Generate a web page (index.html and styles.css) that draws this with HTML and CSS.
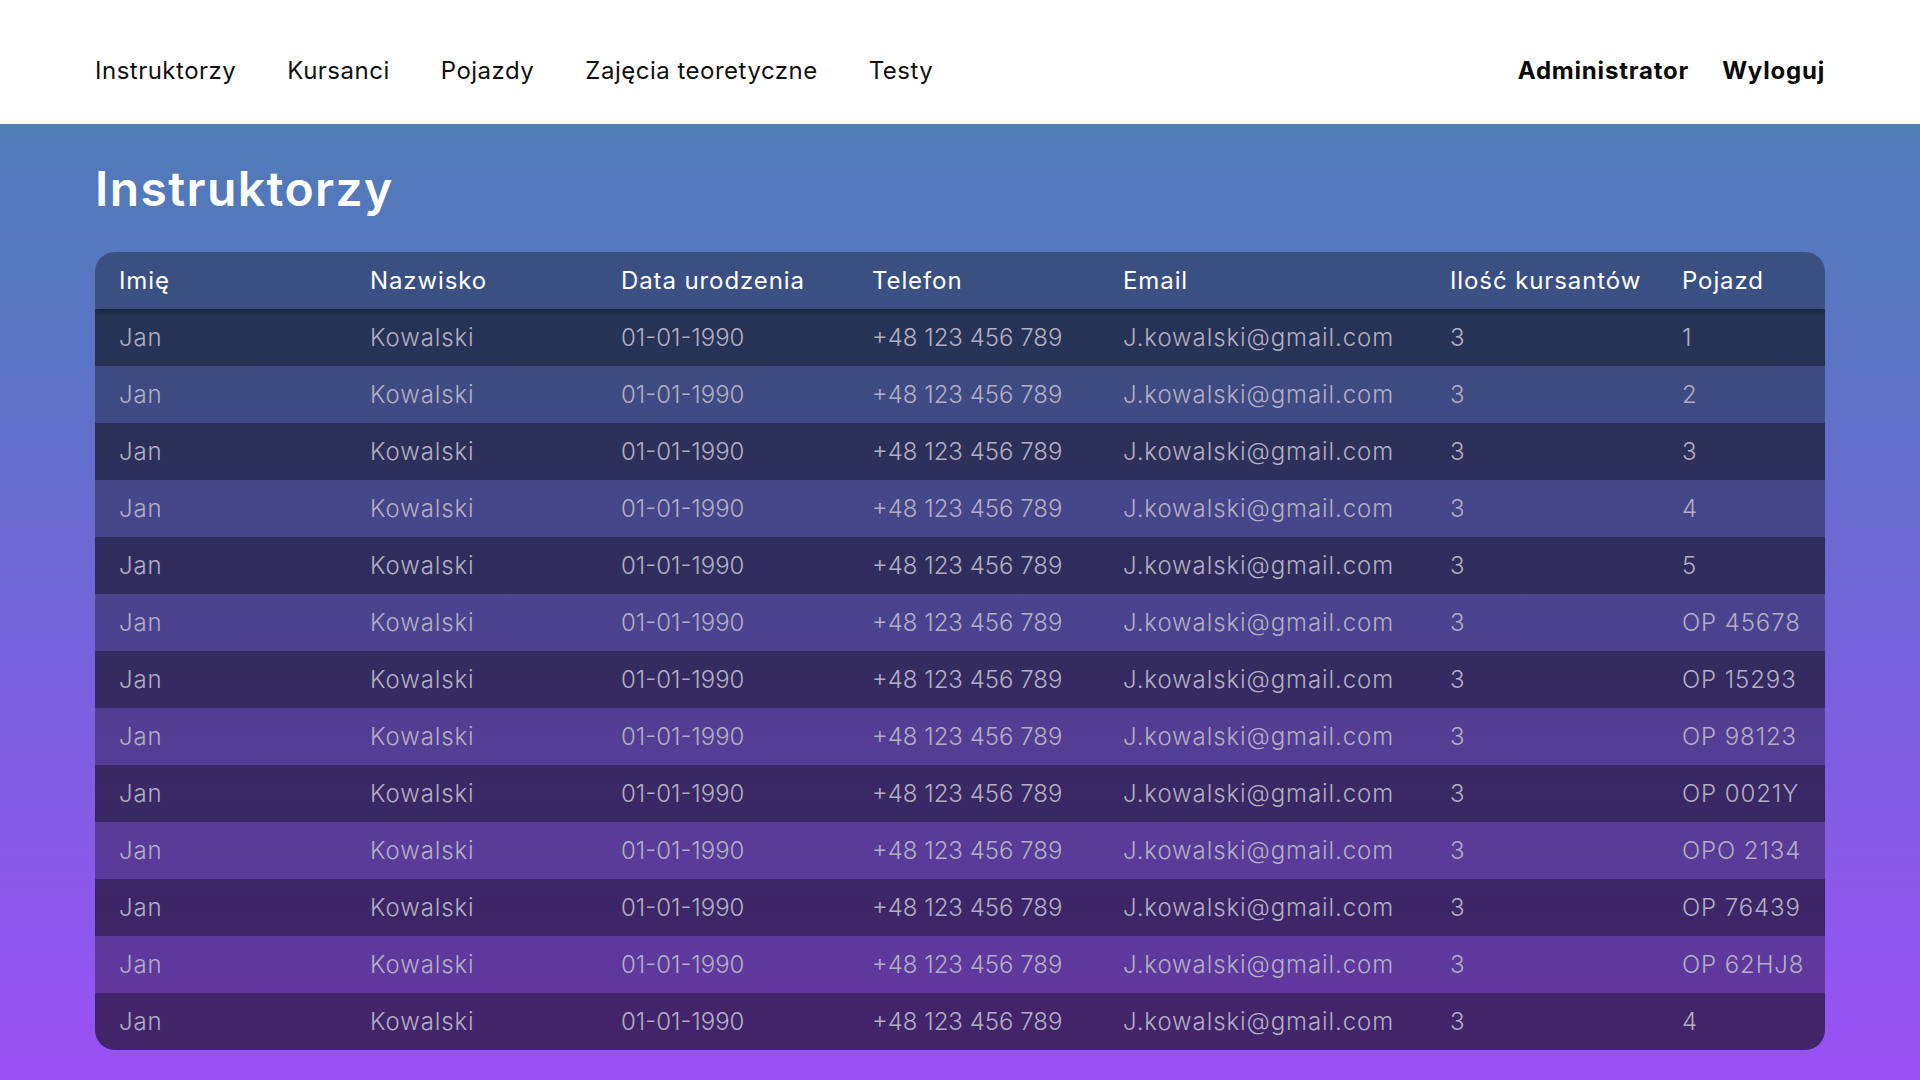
FILE: index.html
```html
<!DOCTYPE html>
<html lang="pl">
<head>
<meta charset="utf-8">
<title>Instruktorzy</title>
<link rel="stylesheet" href="styles.css">
</head>
<body>
<header class="topbar">
  <nav class="nav-left">
    <a class="nav-link" href="#">Instruktorzy</a>
    <a class="nav-link" href="#">Kursanci</a>
    <a class="nav-link" href="#">Pojazdy</a>
    <a class="nav-link" href="#">Zajęcia teoretyczne</a>
    <a class="nav-link" href="#">Testy</a>
  </nav>
  <nav class="nav-right">
    <a class="nav-link strong" href="#">Administrator</a>
    <a class="nav-link strong" href="#">Wyloguj</a>
  </nav>
</header>
<main class="content">
  <h1 class="page-title">Instruktorzy</h1>
  <table class="data-table">
    <colgroup>
      <col class="c1"><col class="c2"><col class="c3"><col class="c4"><col class="c5"><col class="c6"><col class="c7">
    </colgroup>
    <thead>
      <tr><th>Imię</th><th>Nazwisko</th><th>Data urodzenia</th><th>Telefon</th><th>Email</th><th>Ilość kursantów</th><th>Pojazd</th></tr>
    </thead>
    <tbody>
      <tr><td>Jan</td><td>Kowalski</td><td class="num">01-01-1990</td><td class="num">+48 123 456 789</td><td>J.kowalski@gmail.com</td><td>3</td><td>1</td></tr>
      <tr><td>Jan</td><td>Kowalski</td><td class="num">01-01-1990</td><td class="num">+48 123 456 789</td><td>J.kowalski@gmail.com</td><td>3</td><td>2</td></tr>
      <tr><td>Jan</td><td>Kowalski</td><td class="num">01-01-1990</td><td class="num">+48 123 456 789</td><td>J.kowalski@gmail.com</td><td>3</td><td>3</td></tr>
      <tr><td>Jan</td><td>Kowalski</td><td class="num">01-01-1990</td><td class="num">+48 123 456 789</td><td>J.kowalski@gmail.com</td><td>3</td><td>4</td></tr>
      <tr><td>Jan</td><td>Kowalski</td><td class="num">01-01-1990</td><td class="num">+48 123 456 789</td><td>J.kowalski@gmail.com</td><td>3</td><td>5</td></tr>
      <tr><td>Jan</td><td>Kowalski</td><td class="num">01-01-1990</td><td class="num">+48 123 456 789</td><td>J.kowalski@gmail.com</td><td>3</td><td>OP 45678</td></tr>
      <tr><td>Jan</td><td>Kowalski</td><td class="num">01-01-1990</td><td class="num">+48 123 456 789</td><td>J.kowalski@gmail.com</td><td>3</td><td>OP 15293</td></tr>
      <tr><td>Jan</td><td>Kowalski</td><td class="num">01-01-1990</td><td class="num">+48 123 456 789</td><td>J.kowalski@gmail.com</td><td>3</td><td>OP 98123</td></tr>
      <tr><td>Jan</td><td>Kowalski</td><td class="num">01-01-1990</td><td class="num">+48 123 456 789</td><td>J.kowalski@gmail.com</td><td>3</td><td>OP 0021Y</td></tr>
      <tr><td>Jan</td><td>Kowalski</td><td class="num">01-01-1990</td><td class="num">+48 123 456 789</td><td>J.kowalski@gmail.com</td><td>3</td><td>OPO 2134</td></tr>
      <tr><td>Jan</td><td>Kowalski</td><td class="num">01-01-1990</td><td class="num">+48 123 456 789</td><td>J.kowalski@gmail.com</td><td>3</td><td>OP 76439</td></tr>
      <tr><td>Jan</td><td>Kowalski</td><td class="num">01-01-1990</td><td class="num">+48 123 456 789</td><td>J.kowalski@gmail.com</td><td>3</td><td>OP 62HJ8</td></tr>
      <tr><td>Jan</td><td>Kowalski</td><td class="num">01-01-1990</td><td class="num">+48 123 456 789</td><td>J.kowalski@gmail.com</td><td>3</td><td>4</td></tr>
    </tbody>
  </table>
</main>
</body>
</html>
```
FILE: styles.css
```css
* { box-sizing: border-box; }
html, body { margin: 0; padding: 0; }
body {
  font-family: Inter, "Noto Sans", sans-serif;
  min-height: 1080px;
  background: linear-gradient(to bottom, #ffffff 0, #ffffff 124px, #4f7bb8 124px, #5b74c4 360px, #7563db 640px, #9a50f5 1080px);
}
.topbar {
  height: 124px;
  background: #ffffff;
  display: flex;
  align-items: center;
  justify-content: space-between;
  padding: 16px 95px 0;
}
.nav-left, .nav-right { display: flex; align-items: center; gap: 51px; }
.nav-right { gap: 33px; }
.nav-link {
  font-size: 24px;
  color: #111111;
  text-decoration: none;
  font-weight: 400;
  letter-spacing: 0.5px;
}
.nav-link.strong { font-weight: 700; color: #0a0a0a; letter-spacing: 0.8px; }
.content { padding: 36px 95px 30px; }
.page-title {
  margin: 0;
  font-size: 48px;
  line-height: 58px;
  font-weight: 600;
  color: #ffffff;
  letter-spacing: 1.4px;
}
.data-table {
  margin-top: 34px;
  width: 100%;
  table-layout: fixed;
  border-collapse: separate;
  border-spacing: 0;
  border-radius: 20px;
  overflow: hidden;
}
.c1, .c2, .c3, .c4 { width: 251px; }
.c5 { width: 327px; }
.c6 { width: 232px; }
.data-table th, .data-table td {
  height: 57px;
  padding: 0 0 0 24px;
  text-align: left;
  font-size: 24px;
  white-space: nowrap;
  letter-spacing: 0.9px;
}
.data-table td.num { letter-spacing: 0; }
.data-table thead tr {
  background: rgba(0, 0, 0, 0.32);
  box-shadow: 0 4px 6px rgba(0, 0, 0, 0.3);
}
.data-table th { color: #ffffff; font-weight: 400; position: relative; z-index: 1; }
.data-table td { color: #b3afc2; font-weight: 300; }
.data-table tbody tr:nth-child(odd) { background: rgba(0, 0, 0, 0.56); }
.data-table tbody tr:nth-child(even) { background: rgba(0, 0, 0, 0.34); }
```
